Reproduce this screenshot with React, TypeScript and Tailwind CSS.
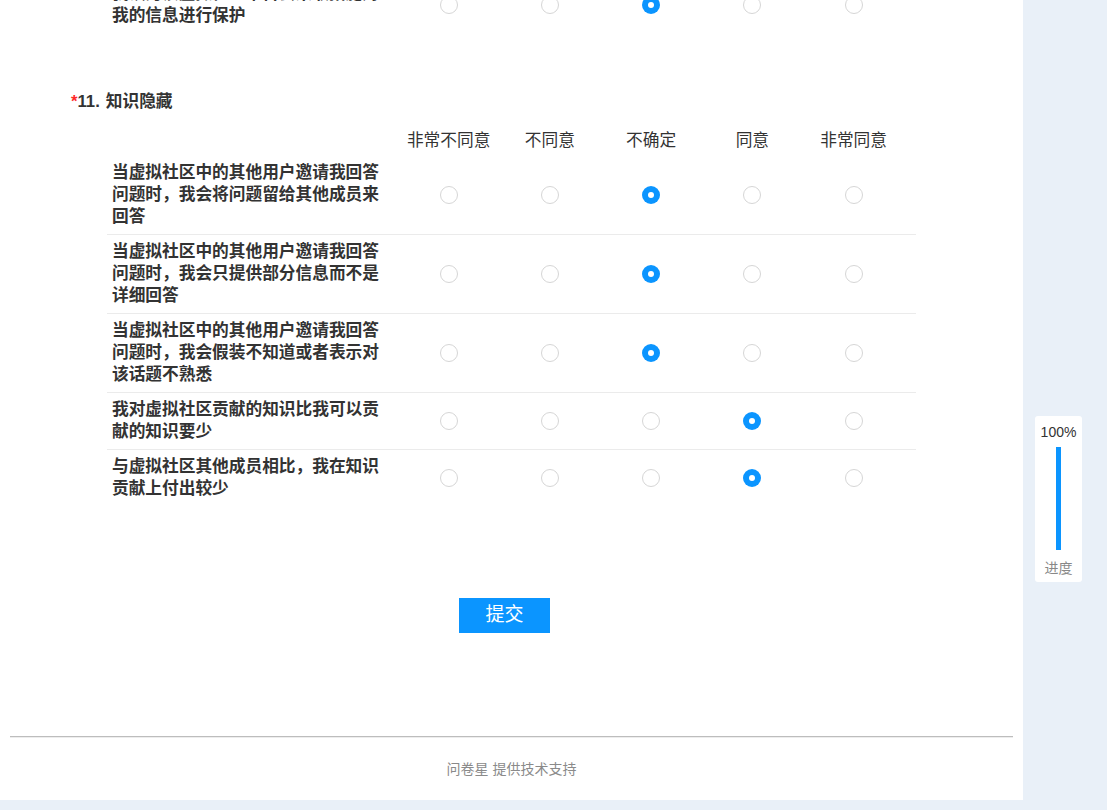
import React from 'react';

const OPTIONS = ['非常不同意', '不同意', '不确定', '同意', '非常同意'];

interface Row {
  label: string;
  answer: number;
}

const PREV_ROW: Row = {
  label: '我认为该虚拟社区平台会采取措施对我的信息进行保护',
  answer: 2,
};

const ROWS: Row[] = [
  { label: '当虚拟社区中的其他用户邀请我回答问题时，我会将问题留给其他成员来回答', answer: 2 },
  { label: '当虚拟社区中的其他用户邀请我回答问题时，我会只提供部分信息而不是详细回答', answer: 2 },
  { label: '当虚拟社区中的其他用户邀请我回答问题时，我会假装不知道或者表示对该话题不熟悉', answer: 2 },
  { label: '我对虚拟社区贡献的知识比我可以贡献的知识要少', answer: 3 },
  { label: '与虚拟社区其他成员相比，我在知识贡献上付出较少', answer: 3 },
];

function Radio({ checked }: { checked: boolean }) {
  if (checked) {
    return (
      <span className="flex h-[18px] w-[18px] items-center justify-center rounded-full bg-[#0b95ff]">
        <span className="h-[6px] w-[6px] rounded-full bg-white" />
      </span>
    );
  }
  return <span className="block h-[18px] w-[18px] rounded-full border-[1.5px] border-[#d6d6d6] bg-white" />;
}

function MatrixRow({ row, last }: { row: Row; last?: boolean }) {
  return (
    <div
      className={`grid grid-cols-[291px_repeat(5,101.25px)_1fr] ${
        last ? '' : 'border-b border-[#ebebeb]'
      }`}
    >
      <div className="py-[6px] pl-[5px] pr-[10px] text-[16.7px] font-bold leading-[22px] text-[#333]">
        {row.label}
      </div>
      {OPTIONS.map((o, i) => (
        <div key={o} className="flex items-center justify-center">
          <Radio checked={row.answer === i} />
        </div>
      ))}
      <div />
    </div>
  );
}

export default function App() {
  return (
    <div
      className="flex min-h-[810px] w-full flex-col bg-[#e9f0f8]"
      style={{ fontFamily: "'Liberation Sans', 'Noto Sans CJK SC', sans-serif" }}
    >
      <div className="flex">
        <div className="h-[800px] w-[1023px] shrink-0 overflow-hidden bg-white">
          <div className="-mt-[23px]">
            {/* tail of question 10 */}
            <div className="ml-[107px] w-[809px]">
              <MatrixRow row={PREV_ROW} last />
            </div>

            {/* question 11 */}
            <div className="ml-[71px] mt-[57px] flex items-center text-[16.7px] font-bold leading-[24px] text-[#333]">
              <span className="text-[#ff2a2a]">*</span>
              <span>11.</span>
              <span className="ml-[6px]">知识隐藏</span>
            </div>

            <div className="ml-[107px] mt-[10px] w-[809px]">
              <div className="grid h-[32px] grid-cols-[291px_repeat(5,101.25px)_1fr] items-center pt-[2px]">
                <div />
                {OPTIONS.map((o) => (
                  <div key={o} className="text-center text-[16.7px] text-[#333]">
                    {o}
                  </div>
                ))}
                <div />
              </div>
              {ROWS.map((r, i) => (
                <MatrixRow key={r.label} row={r} last={i === ROWS.length - 1} />
              ))}
            </div>

            <div className="mt-[92px] flex justify-center pr-[14px]">
              <button
                type="button"
                className="h-[35px] w-[91px] bg-[#0b95ff] text-[19px] text-white"
              >
                提交
              </button>
            </div>

            <div className="mx-[10px] mt-[103px] border-t border-[#bdbdbd] shadow-[0_1px_0_#ededed]" />
            <div className="mt-[22px] text-center text-[14px] leading-[20px] text-[#8a8a8a]">
              问卷星 提供技术支持
            </div>
          </div>
        </div>

        <div className="flex-1">
          <div className="ml-[12px] mt-[416px] flex h-[166px] w-[47px] flex-col items-center rounded-[3px] bg-white">
            <div className="mt-[7px] text-[14px] leading-[18px] text-[#333]">100%</div>
            <div className="mt-[6px] h-[103px] w-[5px] bg-[#0b95ff]" />
            <div className="mt-[8px] text-[14px] leading-[20px] text-[#888]">进度</div>
          </div>
        </div>
      </div>
      <div className="h-[10px]" />
    </div>
  );
}
